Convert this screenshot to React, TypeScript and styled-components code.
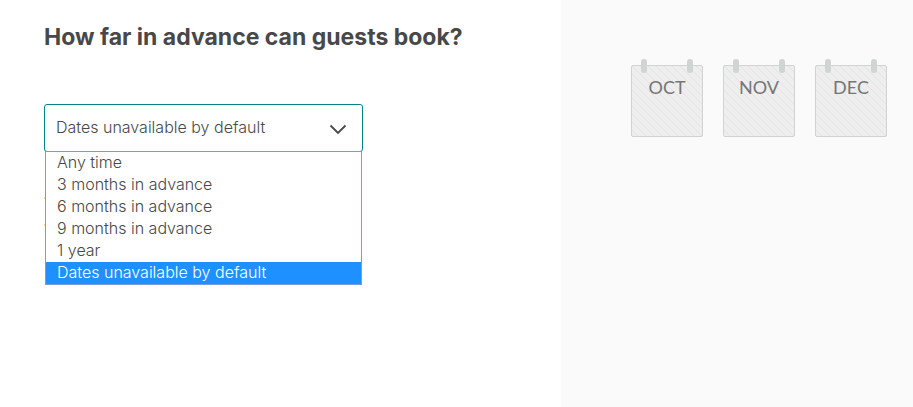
import React, { useState } from "react";
import styled, { createGlobalStyle } from "styled-components";

const GlobalStyle = createGlobalStyle`
  *, *::before, *::after { box-sizing: border-box; }
  body {
    margin: 0;
    background: #ffffff;
    color: #484848;
    font-family: Inter, "Liberation Sans", sans-serif;
  }
`;

const Page = styled.div`
  display: grid;
  grid-template-columns: minmax(0, 1fr) 352px;
  min-height: 100vh;
`;

const Settings = styled.main`
  padding: 20px 44px;
`;

const Title = styled.h1`
  margin: 0 0 50px;
  font-size: 23px;
  font-weight: 700;
  line-height: 34px;
`;

const Field = styled.div`
  position: relative;
  max-width: 319px;
`;

const Select = styled.select`
  display: block;
  width: 100%;
  height: 48px;
  padding: 0 44px 2px 11px;
  appearance: none;
  border: 1px solid #008489;
  border-radius: 3px;
  outline: none;
  background: #ffffff;
  color: #484848;
  font-family: inherit;
  font-size: 16px;
  font-weight: 300;
  cursor: pointer;
`;

const Chevron = styled.svg`
  position: absolute;
  top: 20px;
  right: 16px;
  width: 18px;
  height: 12px;
  pointer-events: none;
`;

const Options = styled.ul`
  position: absolute;
  z-index: 1;
  top: 47px;
  left: 1px;
  right: 1px;
  margin: 0;
  padding: 0;
  list-style: none;
  border: 1px solid #7a9cd3;
  background: #ffffff;
`;

const Option = styled.li<{ $selected: boolean }>`
  padding: 0 11px 2px;
  font-size: 16px;
  font-weight: 300;
  line-height: 20px;
  cursor: default;
  color: ${(p) => (p.$selected ? "#ffffff" : "#484848")};
  background: ${(p) => (p.$selected ? "#1e90ff" : "transparent")};
`;

const Tip = styled.svg`
  display: block;
  width: 24px;
  height: 32px;
  margin-top: 44px;
`;

const Preview = styled.aside`
  padding: 65px 26px 20px 70px;
  background: #fafafa;
`;

const Months = styled.div`
  display: flex;
  gap: 20px;
`;

const Month = styled.div`
  position: relative;
  width: 72px;
  height: 72px;
  padding-top: 9px;
  border: 1px solid #d0d3d2;
  border-radius: 2px;
  background: #eeeeee linear-gradient(45deg, transparent 44%, #e2e2e2 44% 56%, transparent 56%) 0 0 / 8px 8px;
  color: #767676;
  font-family: Lato, "Liberation Sans", sans-serif;
  font-size: 18px;
  font-weight: 400;
  line-height: 24px;
  text-align: center;

  &::before,
  &::after {
    content: "";
    position: absolute;
    top: -7px;
    width: 6px;
    height: 14px;
    border-radius: 3px;
    background: #d0d4d3;
  }
  &::before { left: 9px; }
  &::after { right: 9px; }
`;

const choices = [
  "Any time",
  "3 months in advance",
  "6 months in advance",
  "9 months in advance",
  "1 year",
  "Dates unavailable by default",
];

export default function App() {
  const [value, setValue] = useState(choices[5]);
  const [open, setOpen] = useState(true);

  return (
    <>
      <GlobalStyle />
      <Page>
        <Settings>
          <Title id="advance-title">How far in advance can guests book?</Title>
          <Field>
            <Select
              aria-labelledby="advance-title"
              value={value}
              onChange={(e) => setValue(e.target.value)}
              onMouseDown={(e) => {
                e.preventDefault();
                setOpen(!open);
              }}
            >
              {choices.map((c) => (
                <option key={c}>{c}</option>
              ))}
            </Select>
            <Chevron viewBox="0 0 18 12" aria-hidden="true">
              <path d="M1.500 1.500 9 9l7.500-7.500" fill="none" stroke="#484848" strokeWidth="1.800" />
            </Chevron>
            {open && (
              <Options role="listbox" aria-labelledby="advance-title">
                {choices.map((c) => (
                  <Option
                    key={c}
                    role="option"
                    aria-selected={c === value}
                    $selected={c === value}
                    onClick={() => {
                      setValue(c);
                      setOpen(false);
                    }}
                  >
                    {c}
                  </Option>
                ))}
              </Options>
            )}
          </Field>
          <Tip viewBox="0 0 24 32" aria-hidden="true">
            <path d="M1 2h4M1 29h4" stroke="#ffc670" strokeWidth="2" strokeLinecap="round" />
          </Tip>
        </Settings>
        <Preview>
          <Months>
            {["OCT", "NOV", "DEC"].map((m) => (
              <Month key={m}>{m}</Month>
            ))}
          </Months>
        </Preview>
      </Page>
    </>
  );
}
